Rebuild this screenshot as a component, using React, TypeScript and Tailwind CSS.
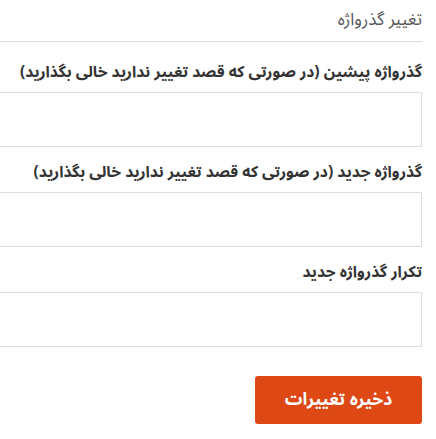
const fields = [
  { key: "old", label: "گذرواژه پیشین (در صورتی که قصد تغییر ندارید خالی بگذارید)" },
  { key: "new", label: "گذرواژه جدید (در صورتی که قصد تغییر ندارید خالی بگذارید)" },
  { key: "repeat", label: "تکرار گذرواژه جدید" },
];

export default function App() {
  return (
    <div
      dir="rtl"
      className="w-[436px] h-[439px] overflow-hidden bg-white"
      style={{ fontFamily: '"Noto Sans Arabic", "DejaVu Sans", sans-serif' }}
    >
      <div className="mr-[14px]">
        <h2 className="pt-[8px] pb-[9px] text-[17px] leading-[24px] font-normal text-[#555] border-b border-[#ddd]">
          تغییر گذرواژه
        </h2>

        <form className="flex flex-col gap-[14px] pt-[19px]">
          {fields.map(({ key, label }) => (
            <div key={key} className="flex flex-col gap-[7px]">
              <label className="text-[15.6px] leading-[24px] font-bold text-[#333] whitespace-nowrap">{label}</label>
              <input
                type="password"
                className="h-[55px] w-[calc(100%+20px)] border border-[#ddd] bg-white px-3 outline-none"
              />
            </div>
          ))}

          <div className="pt-[15px]">
            <button
              type="button"
              className="w-[167px] h-[48px] rounded-[3px] bg-[#dd4814] text-white text-[17.5px] font-bold"
            >
              ذخیره تغییرات
            </button>
          </div>
        </form>
      </div>
    </div>
  );
}
